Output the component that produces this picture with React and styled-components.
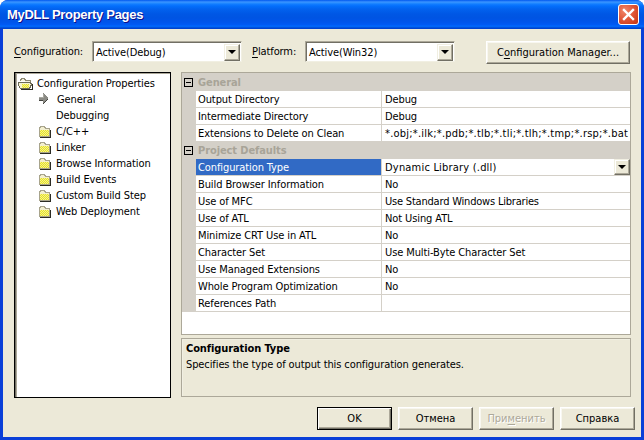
import React from "react";
import styled, { createGlobalStyle } from "styled-components";

const UI_FONT = `"DejaVu Sans Condensed", "Liberation Sans", sans-serif`;

const Global = createGlobalStyle`
  html, body { margin: 0; padding: 0; background: #fff; }
  body { width: 644px; height: 440px; overflow: hidden; font: 11px ${UI_FONT}; color: #000; letter-spacing: -0.1px; }
  * { box-sizing: border-box; }
  u { text-decoration: underline; text-underline-offset: 2px; text-decoration-thickness: 1px; }
`;

const Window = styled.div`
  width: 644px; height: 440px; display: flex; flex-direction: column;
  border-radius: 8px 8px 0 0; overflow: hidden; background: #0a3fd8;
`;
const TitleBar = styled.div`
  flex: 0 0 29px; height: 29px; padding: 0 5px 0 7px; display: flex; align-items: center; justify-content: space-between;
  background: linear-gradient(180deg,#0058ee 0,#3a93ff 2px,#288eff 3px,#127dff 4px,#036ffc 6px,#0262ee 9px,#0057e5 14px,#0054e3 18px,#0055eb 22px,#005bf5 25px,#026afe 26px,#0062ef 27px,#0043cf 28px,#0043cf 29px);
`;
const Title = styled.div`
  font: bold 13px "Liberation Sans", sans-serif; color: #fff; text-shadow: 1px 1px 0 #0f1089; letter-spacing: -0.3px; margin-top: -1px;
`;
const CloseButton = styled.div`
  width: 21px; height: 21px; border-radius: 3px; border: 1px solid #fff; display: flex; align-items: center; justify-content: center;
  background: radial-gradient(circle at 30% 30%, #f0876a 0, #e2593a 45%, #c5330f 100%); margin-top: -1px;
`;
const Frame = styled.div`
  flex: 1; margin: 0 3px 3px; background: #ece9d8; padding: 12px 10px 0 11px; display: flex; flex-direction: column;
  min-height: 0;
`;
const TopRow = styled.div`
  display: flex; align-items: flex-start; height: 31px;
`;
const FieldLabel = styled.label`
  width: ${p => p.$w}px; height: 20px; padding-left: ${p => p.$pad || 0}px; display: flex; align-items: center;
`;
const Combo = styled.div`
  width: ${p => p.$w}px; height: 21px; display: flex; align-items: center; background: #fff;
  border: 1px solid; border-color: #aca899 #f1efe2 #f1efe2 #aca899;
  box-shadow: inset 1px 1px 0 #716f64; padding: 2px 1px 1px 3px; justify-content: space-between;
`;
const ArrowButton = styled.div`
  width: ${p => p.$w || 16}px; height: ${p => p.$h || 17}px; display: flex; align-items: center; justify-content: center; flex: none; background: #ece9d8;
  border: 1px solid; border-color: #f1efe2 #716f64 #716f64 #f1efe2; box-shadow: inset -1px -1px 0 #aca899, inset 1px 1px 0 #fff;
  &::after { content: ""; border: 4px solid transparent; border-top: 4px solid #000; border-bottom: 0; width: 0; height: 0; }
`;
const PushButton = styled.button`
  width: ${p => p.$w}px; height: ${p => p.$h || 23}px; font: 11px ${UI_FONT}; padding: 0; margin-left: ${p => p.$ml || 0}px;
  color: ${p => (p.disabled ? "#aca899" : "#000")}; background: #ece9d8; text-shadow: ${p => (p.disabled ? "1px 1px 0 #fff" : "none")};
  border: 1px solid; border-color: ${p => (p.$def ? "#000" : "#fff #716f64 #716f64 #fff")};
  box-shadow: ${p => (p.$def ? "inset 1px 1px 0 #fff, inset -1px -1px 0 #716f64, inset -2px -2px 0 #aca899" : "inset -1px -1px 0 #aca899, inset 1px 1px 0 #f8f7f0")};
`;
const Main = styled.div`
  display: flex; gap: 10px; height: 325px;
`;
const TreePanel = styled.div`
  width: 157px; height: 326px; background: #fff; padding: 2px 0 0 3px;
  border: 1px solid #000; border-left: 1px solid #000;
  box-shadow: inset 1px 0 0 #716f64, inset 2px 0 0 #aca899, inset 0 1px 0 #aca899;
`;
const TreeRow = styled.div`
  height: 16px; display: flex; align-items: center; padding-left: ${p => p.$indent}px; gap: ${p => p.$gap}px;
`;
const RightColumn = styled.div`
  flex: 1; display: flex; flex-direction: column; gap: 3px; width: 450px;
`;
const Grid = styled.div`
  height: 263px; background: #fff; border: 1px solid #aca899; overflow: hidden; display: flex; flex-direction: column;
`;
const SectionRow = styled.div`
  height: ${p => p.$h}px; background: #d4d0c8; display: flex; align-items: center; padding-left: 2px; gap: 5px;
`;
const Toggle = styled.span`
  width: 9px; height: 9px; border: 1px solid #000; position: relative; flex: none;
  &::after { content: ""; position: absolute; left: 1px; right: 1px; top: 3px; height: 1px; background: #000; }
`;
const SectionName = styled.span`
  font-weight: bold; color: #a8a498;
`;
const PropRow = styled.div`
  height: 17px; display: flex; background: #d4d0c8; padding-left: 14px;
`;
const PropName = styled.div`
  width: 186px; height: 17px; flex: none; padding-left: 2px; display: flex; align-items: center;
  background: ${p => (p.$sel ? "#316ac5" : "#fff")}; color: ${p => (p.$sel ? "#fff" : "#000")};
  border-bottom: 1px solid #d4d0c8; border-right: 1px solid #d4d0c8;
`;
const PropValue = styled.div`
  flex: 1; min-width: 0; height: 17px; background: #fff; padding-left: 3px; display: flex; align-items: center; justify-content: space-between;
  border-bottom: 1px solid #d4d0c8; white-space: nowrap; overflow: hidden;
  letter-spacing: ${p => p.$ls ?? -0.1}px;
`;
const GridFill = styled.div`
  flex: 1; background: #fff;
`;
const Description = styled.div`
  height: 59px; border: 1px solid #aca899; padding: 3px 4px; line-height: 14px;
  box-shadow: inset 1px 1px 0 #f1efe2;
`;
const DescTitle = styled.div`
  font-weight: bold; margin-bottom: 2px;
`;
const ButtonRow = styled.div`
  display: flex; justify-content: flex-end; gap: 6px; margin-top: 10px; margin-right: -4px;
`;

const FolderClosed = () => (
  <svg width="14" height="13" viewBox="0 0 14 13" shapeRendering="crispEdges">
    <defs>
      <pattern id="ditherC" width="2" height="2" patternUnits="userSpaceOnUse">
        <rect width="2" height="2" fill="#f6f48a" />
        <rect width="1" height="1" fill="#e6e02a" />
        <rect x="1" y="1" width="1" height="1" fill="#e6e02a" />
      </pattern>
    </defs>
    <path d="M1 3V2h1V1h4v1h1v1h5v8H1z" fill="#f3efcf" />
    <path d="M1.500 2.500h1v-1h3.500v1h1v1h4.500v8h-10z" fill="none" stroke="#a8a48c" />
    <rect x="2" y="5" width="9" height="6" fill="url(#ditherC)" />
    <path d="M12 5h1v8H2v-1h10z" fill="#2c2c24" />
  </svg>
);
const FolderOpen = () => (
  <svg width="16" height="14" viewBox="0 0 16 14" shapeRendering="crispEdges">
    <defs>
      <pattern id="ditherO" width="2" height="2" patternUnits="userSpaceOnUse">
        <rect width="2" height="2" fill="#f6f48a" />
        <rect width="1" height="1" fill="#e6e02a" />
        <rect x="1" y="1" width="1" height="1" fill="#e6e02a" />
      </pattern>
    </defs>
    <path d="M2 4.500V3.500h1v-1h3.500v1h1v1h5v2" fill="#f3efdf" stroke="#8c8870" />
    <path d="M.5 6.500h11l2 1v1l-2 4H2.500l-2-3z" fill="#f6f3d0" stroke="#6c6a58" />
    <rect x="4" y="8" width="7" height="4" fill="url(#ditherO)" />
    <path d="M14 8h1v5.500H3V13h11z" fill="#2c2c24" />
  </svg>
);
const ArrowIcon = () => (
  <svg width="11" height="12" viewBox="0 0 11 12" shapeRendering="crispEdges">
    <path d="M5 0h1v1h1v1h1v1h1v1h1v2h-1v1H8v1H7v1H6v1H5V8H1V4h4z" fill="#8a8a84" />
    <path d="M1 4h4V1h1v4H1z" fill="#a8a8a0" />
    <path d="M1 7h4v1H1zM5 10h1V9h1V8h1V7h1V6h1v1H9v1H8v1H7v1H6v1H5z" fill="#44443f" />
  </svg>
);
const CloseIcon = () => (
  <svg width="13" height="13" viewBox="0 0 13 13">
    <path d="M2 2l9 9M11 2l-9 9" stroke="#fff" strokeWidth="2.400" strokeLinecap="square" />
  </svg>
);

const treeItems = ["C/C++", "Linker", "Browse Information", "Build Events", "Custom Build Step", "Web Deployment"];
const general = [
  ["Output Directory", "Debug"],
  ["Intermediate Directory", "Debug"],
  ["Extensions to Delete on Clean", "*.obj;*.ilk;*.pdb;*.tlb;*.tli;*.tlh;*.tmp;*.rsp;*.bat", 0.22],
];
const defaults = [
  ["Build Browser Information", "No"],
  ["Use of MFC", "Use Standard Windows Libraries", -0.2],
  ["Use of ATL", "Not Using ATL"],
  ["Minimize CRT Use in ATL", "No"],
  ["Character Set", "Use Multi-Byte Character Set"],
  ["Use Managed Extensions", "No"],
  ["Whole Program Optimization", "No"],
  ["References Path", ""],
];

export default function App() {
  return (
    <Window>
      <Global />
      <TitleBar>
        <Title>MyDLL Property Pages</Title>
        <CloseButton><CloseIcon /></CloseButton>
      </TitleBar>
      <Frame>
        <TopRow>
          <FieldLabel $w={78}><span><u>C</u>onfiguration:</span></FieldLabel>
          <Combo $w={150}>Active(Debug)<ArrowButton /></Combo>
          <FieldLabel $w={63} $pad={10}><span><u>P</u>latform:</span></FieldLabel>
          <Combo $w={150}>Active(Win32)<ArrowButton /></Combo>
          <PushButton $w={144} $ml={31}>C<u>o</u>nfiguration Manager...</PushButton>
        </TopRow>
        <Main>
          <TreePanel>
            <TreeRow $indent={0} $gap={3}><FolderOpen />Configuration Properties</TreeRow>
            <TreeRow $indent={20} $gap={8}><ArrowIcon />General</TreeRow>
            <TreeRow $indent={38} $gap={0}>Debugging</TreeRow>
            {treeItems.map(t => (
              <TreeRow key={t} $indent={20} $gap={4}><FolderClosed />{t}</TreeRow>
            ))}
          </TreePanel>
          <RightColumn>
            <Grid>
              <SectionRow $h={18}><Toggle /><SectionName>General</SectionName></SectionRow>
              {general.map(([n, v, ls]) => (
                <PropRow key={n}><PropName>{n}</PropName><PropValue $ls={ls}>{v}</PropValue></PropRow>
              ))}
              <SectionRow $h={17}><Toggle /><SectionName>Project Defaults</SectionName></SectionRow>
              <PropRow>
                <PropName $sel>Configuration Type</PropName>
                <PropValue $ls={0.2}>Dynamic Library (.dll)<ArrowButton $w={16} $h={16} /></PropValue>
              </PropRow>
              {defaults.map(([n, v, ls]) => (
                <PropRow key={n}><PropName>{n}</PropName><PropValue $ls={ls}>{v}</PropValue></PropRow>
              ))}
              <GridFill />
            </Grid>
            <Description>
              <DescTitle>Configuration Type</DescTitle>
              <div>Specifies the type of output this configuration generates.</div>
            </Description>
          </RightColumn>
        </Main>
        <ButtonRow>
          <PushButton $w={75} $def>OK</PushButton>
          <PushButton $w={75}>Отмена</PushButton>
          <PushButton $w={75} disabled>При<u>м</u>енить</PushButton>
          <PushButton $w={75}>Справка</PushButton>
        </ButtonRow>
      </Frame>
    </Window>
  );
}
